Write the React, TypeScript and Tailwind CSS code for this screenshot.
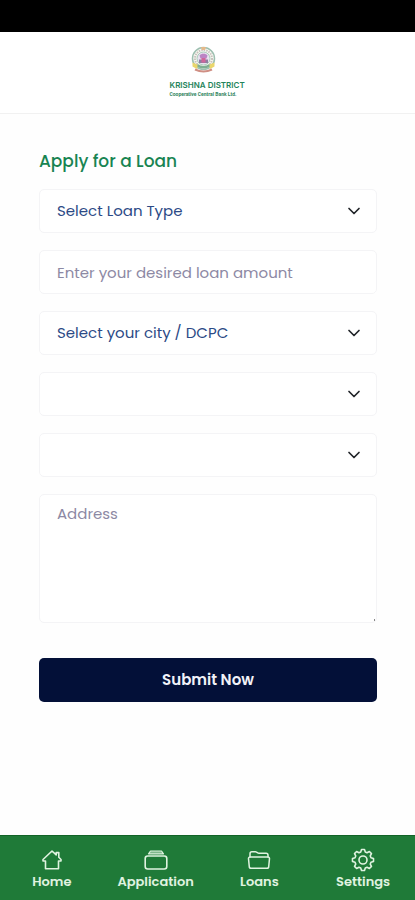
import { useState, type ReactNode } from 'react'
import { IoFolderOpenOutline } from 'react-icons/io5'

const fieldClass =
  'block w-full rounded-[5px] border border-[#f4f4f6] bg-white px-[17px] text-[15px] placeholder:text-[#8d89a4] outline-none focus:border-[#1f7a38]'

function BankLogo() {
  return (
    <svg className="ml-5 h-[27px] w-[27px]" viewBox="0 0 54 54" fill="none" aria-hidden="true">
      <circle cx="27" cy="25" r="22" fill="#f8f8f2" stroke="#9dbfb0" strokeWidth="3" />
      <circle cx="27" cy="25" r="17" stroke="#c9c0bd" strokeWidth="4" strokeDasharray="3 2" />
      <circle cx="27" cy="25" r="13" fill="#e9e0ef" stroke="#a9cdbc" strokeWidth="2" />
      <path d="M19 19c3-5 13-5 16 0l-2 6H21z" fill="#bb84c4" />
      <path d="M18 27h18v7H18z" fill="#8f7da2" />
      <path d="M23 24h8v9h-8z" fill="#d0659a" />
      <path d="M22 2h10l-2 6h-6z" fill="#e5b98a" />
      <path d="M5 33l12 5-3 8-9-5z" fill="#ead66c" />
      <path d="M49 33l-12 5 3 8 9-5z" fill="#ead66c" />
      <path d="M15 36q12 8 24 0v6q-12 6-24 0z" fill="#7fb093" />
      <path d="M10 47q17 8 34 0" stroke="#d08f84" strokeWidth="4" />
    </svg>
  )
}

function HomeIcon() {
  return (
    <svg
      className="h-[22px] w-[22px]"
      viewBox="0 0 22 22"
      fill="none"
      stroke="currentColor"
      strokeWidth="1.6"
      strokeLinecap="round"
      strokeLinejoin="round"
      aria-hidden="true"
    >
      <path d="M11 2 2 10.5V12h2.5v7.8h13V12H20v-1.5L17.8 8.3V3.6h-2.6v2.3z" />
    </svg>
  )
}

function ApplicationIcon() {
  return (
    <svg
      className="h-[22px] w-[24px]"
      viewBox="0 0 24 22"
      fill="none"
      stroke="currentColor"
      strokeWidth="1.6"
      strokeLinecap="round"
      strokeLinejoin="round"
      aria-hidden="true"
    >
      <rect x="1.2" y="7" width="21.6" height="13" rx="2.5" />
      <path d="M4.5 4.8h15L17.5 2h-11z" fill="currentColor" fillOpacity="0.5" strokeWidth="1.2" />
    </svg>
  )
}

// eight teeth around the hub: two points on each tip, two in each valley
const gearPoints = Array.from({ length: 8 }, (_, i) => i * 45)
  .flatMap((a) => [
    [a - 8, 10.6],
    [a + 8, 10.6],
    [a + 16, 8.3],
    [a + 29, 8.3],
  ])
  .map(([deg, r]) => {
    const t = (deg * Math.PI) / 180
    return `${(12 + r * Math.sin(t)).toFixed(2)},${(12 - r * Math.cos(t)).toFixed(2)}`
  })
  .join(' ')

function SettingsIcon() {
  return (
    <svg
      className="h-6 w-6"
      viewBox="0 0 24 24"
      fill="none"
      stroke="currentColor"
      strokeWidth="1.6"
      strokeLinejoin="round"
      aria-hidden="true"
    >
      <polygon points={gearPoints} />
      <circle cx="12" cy="12" r="4" />
    </svg>
  )
}

function SelectField({ label, options }: { label: string; options: string[] }) {
  return (
    <div className="relative">
      <select aria-label={label} className={`${fieldClass} h-11 appearance-none pr-10 text-[#2c4a86]`}>
        {options.map((option) => (
          <option key={option}>{option}</option>
        ))}
      </select>
      <svg
        className="pointer-events-none absolute top-4 right-4 h-3 w-3.5 text-[#222529]"
        viewBox="0 0 14 12"
        fill="none"
        stroke="currentColor"
        strokeWidth="1.7"
        strokeLinecap="round"
        strokeLinejoin="round"
        aria-hidden="true"
      >
        <path d="m2 3.5 5 5 5-5" />
      </svg>
    </div>
  )
}

function NavItem({ label, children }: { label: string; children: ReactNode }) {
  return (
    <a href="#" className="flex flex-col items-center gap-px pt-3 text-[#e0f3e0]">
      <span className="flex h-6 items-center">{children}</span>
      <span className="text-[13px] leading-[18px] font-semibold">{label}</span>
    </a>
  )
}

export default function App() {
  const [amount, setAmount] = useState('')
  const [address, setAddress] = useState('')

  return (
    <div className="flex min-h-screen flex-col bg-[#fefefe] font-['Poppins','Inter',sans-serif]">
      <div className="h-8 shrink-0 bg-black" />

      <header className="flex h-[82px] shrink-0 justify-center border-b border-[#f1f1f1] bg-white pt-[14px]">
        <div className="w-[76px] font-['Roboto',sans-serif] whitespace-nowrap">
          <BankLogo />
          <p className="mt-2 font-['Inter',sans-serif] text-[8px] leading-[9px] font-semibold text-[#23835a]">
            KRISHNA DISTRICT
          </p>
          <p className="text-[5px] leading-[8px] font-bold text-[#33865f]">Cooperative Central Bank Ltd.</p>
        </div>
      </header>

      <main className="pt-[33px] pr-[38px] pb-8 pl-[39px]">
        <h1 className="text-[17px] leading-7 font-medium text-[#188452]">Apply for a Loan</h1>

        <form className="mt-[14px]" onSubmit={(e) => e.preventDefault()}>
          <div className="flex flex-col gap-[17px]">
            <SelectField label="Loan type" options={['Select Loan Type']} />
            <input
              type="text"
              inputMode="numeric"
              aria-label="Loan amount"
              placeholder="Enter your desired loan amount"
              className={`${fieldClass} h-11 text-[#2c4a86]`}
              value={amount}
              onChange={(e) => setAmount(e.target.value)}
            />
            <SelectField label="City" options={['Select your city / DCPC']} />
            <SelectField label="Branch" options={['']} />
            <SelectField label="Society" options={['']} />
            <div className="relative">
              <textarea
                aria-label="Address"
                placeholder="Address"
                className={`${fieldClass} h-[129px] resize-none pt-[7px] leading-6 text-[#2c4a86]`}
                value={address}
                onChange={(e) => setAddress(e.target.value)}
              />
              <span className="absolute right-0.5 bottom-0.5 h-0.5 w-px bg-[#888888]" />
            </div>
          </div>

          <button
            type="submit"
            className="mt-[35px] h-11 w-full cursor-pointer rounded-[5px] bg-[#031038] text-[15px] font-semibold text-[#f1f2f8]"
          >
            Submit Now
          </button>
        </form>
      </main>

      <nav className="mt-auto grid h-[65px] shrink-0 grid-cols-4 border-t border-[#126327] bg-[#1f7a38]">
        <NavItem label="Home">
          <HomeIcon />
        </NavItem>
        <NavItem label="Application">
          <ApplicationIcon />
        </NavItem>
        <NavItem label="Loans">
          <IoFolderOpenOutline className="h-6 w-6" />
        </NavItem>
        <NavItem label="Settings">
          <SettingsIcon />
        </NavItem>
      </nav>
    </div>
  )
}
